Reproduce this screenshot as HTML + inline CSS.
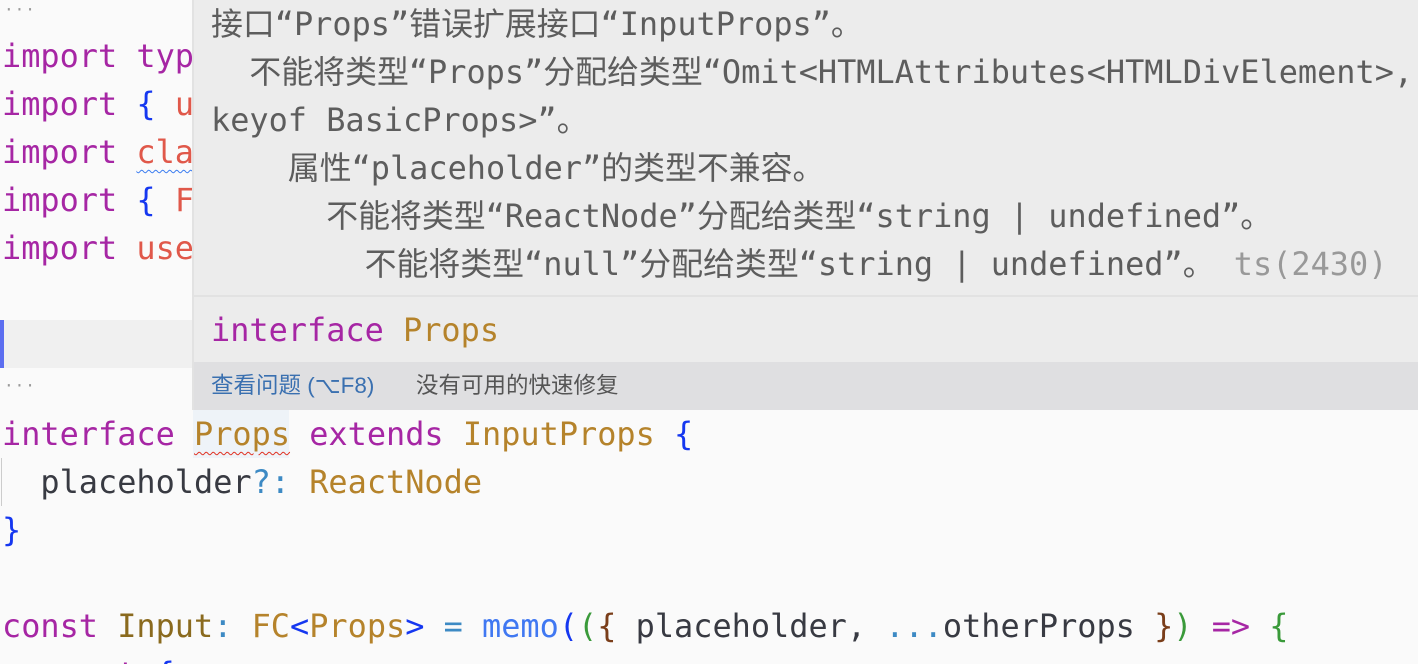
<!DOCTYPE html>
<html style="overflow:hidden;height:664px"><head><meta charset="utf-8"><style>
body{margin:0;width:1418px;height:664px;overflow:hidden;background:#fafafa;position:relative;font-family:"DejaVu Sans Mono","Noto Sans CJK SC",monospace;font-size:31.9px}
.l{position:absolute;left:2px;height:48px;line-height:48px;white-space:pre;color:#383a42}
.k{color:#a626a4}.m{color:#e0584a}.b{color:#1537f0}.t{color:#b5832b}.o{color:#3d8ac4}.f{color:#4078f2}
.dots{position:absolute;left:4px;font-size:16px;color:#999;letter-spacing:1px}
#tip{position:absolute;left:192px;top:0;width:1226px;height:410px;background:#ececec;border-left:2px solid #e2e2e2;box-sizing:border-box}
.tl{position:absolute;left:17px;height:48px;line-height:48px;white-space:pre;color:#5d5d5d}
#sb{position:absolute;left:0;top:362px;width:100%;height:48px;background:#dfdfe1;font-family:"Liberation Sans","Noto Sans CJK SC",sans-serif;font-size:22.5px;line-height:48px;white-space:pre}
</style></head><body>
<div class="dots" style="top:0">···</div>
<div class="l" style="top:32px"><span class="k">import</span> <span class="k">type</span></div>
<div class="l" style="top:80px"><span class="k">import</span> <span class="b">{</span> <span class="m">u</span></div>
<div class="l" style="top:128px"><span class="k">import</span> <span class="m" style="text-decoration:underline wavy #3a7cf0;text-decoration-thickness:1px;text-underline-offset:6px">cla</span></div>
<div class="l" style="top:176px"><span class="k">import</span> <span class="b">{</span> <span class="m">F</span></div>
<div class="l" style="top:224px"><span class="k">import</span> <span class="m">use</span></div>
<div style="position:absolute;left:0;top:320px;width:1418px;height:48px;background:#f0f0f0"></div>
<div style="position:absolute;left:0;top:320px;width:4px;height:48px;background:#5c6ef0"></div>
<div class="dots" style="top:376px">···</div>
<div style="position:absolute;left:193px;top:410px;width:96px;height:48px;background:#eef3f8"></div>
<div class="l" style="top:410px"><span class="k">interface</span> <span class="t" style="text-decoration:underline wavy #e03020;text-decoration-thickness:1px;text-underline-offset:6px">Props</span> <span class="k">extends</span> <span class="t">InputProps</span> <span class="b">{</span></div>
<div style="position:absolute;left:1px;top:458px;width:1px;height:48px;background:#ccc"></div>
<div class="l" style="top:458px">  placeholder<span class="o">?:</span> <span class="t">ReactNode</span></div>
<div class="l" style="top:506px"><span class="b">}</span></div>
<div class="l" style="top:602px"><span class="k">const</span> <span style="color:#8a6a1e">Input</span><span class="o">:</span> <span class="t">FC</span><span class="b">&lt;</span><span class="t">Props</span><span class="b">&gt;</span> <span class="o">=</span> <span class="f">memo</span><span class="b">(</span><span style="color:#3a9a3a">(</span><span style="color:#7a3e1a">{</span> placeholder, <span class="o">...</span>otherProps <span style="color:#7a3e1a">}</span><span style="color:#3a9a3a">)</span> <span class="k">=&gt;</span> <span style="color:#3a9a3a">{</span></div>
<div style="position:absolute;left:0;top:650px;width:1418px;height:14px;overflow:hidden"><div class="l" style="top:0;height:14px;overflow:visible">  <span class="k">const</span> <span class="b">{</span></div></div>
<div id="tip">
<div class="tl" style="top:0">接口“Props”错误扩展接口“InputProps”。</div>
<div class="tl" style="top:48px">  不能将类型“Props”分配给类型“Omit&lt;HTMLAttributes&lt;HTMLDivElement&gt;,</div>
<div class="tl" style="top:96px">keyof BasicProps&gt;”。</div>
<div class="tl" style="top:144px">    属性“placeholder”的类型不兼容。</div>
<div class="tl" style="top:192px">      不能将类型“ReactNode”分配给类型“string | undefined”。</div>
<div class="tl" style="top:240px">        不能将类型“null”分配给类型“string | undefined”。 <span style="color:#999">ts(2430)</span></div>
<div style="position:absolute;left:0;top:295px;width:100%;height:2px;background:#e2e2e2"></div>
<div class="tl" style="top:306px"><span class="k">interface</span> <span class="t">Props</span></div>
<div id="sb"><span style="position:absolute;left:17px;color:#3a70b0">查看问题 (⌥F8)</span><span style="position:absolute;left:222px;color:#555">没有可用的快速修复</span></div>
</div>
</body></html>
